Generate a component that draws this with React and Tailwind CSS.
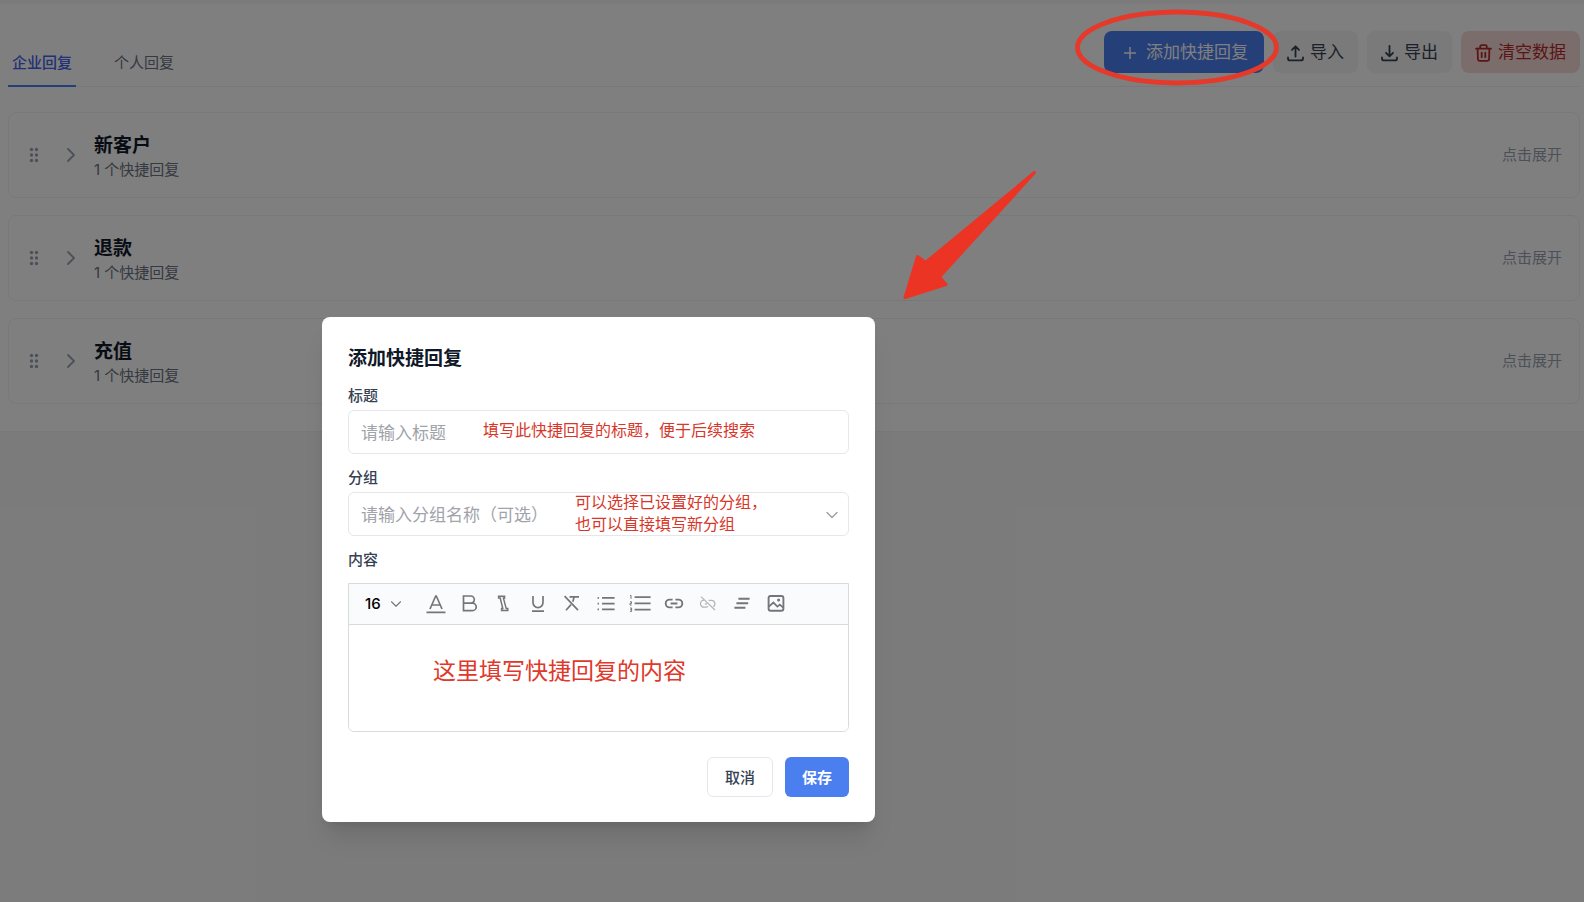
import { useState } from "react";
import { ChevronDown, ChevronRight } from "lucide-react";

const groups = [
  { id: 1, name: "新客户", count: 1 },
  { id: 2, name: "退款", count: 1 },
  { id: 3, name: "充值", count: 1 },
];

// header icons
const PlusIcon = () => (
  <svg width="20" height="20" viewBox="0 0 20 20" fill="none" stroke="currentColor" strokeWidth="1.5">
    <path d="M10 4v12M4 10h12" />
  </svg>
);

const UploadIcon = () => (
  <svg width="17" height="17" viewBox="0 0 17 17" fill="none" stroke="currentColor" strokeWidth="1.8" strokeLinecap="round" strokeLinejoin="round">
    <path d="M1 12.4v1a2 2 0 0 0 2 2h11a2 2 0 0 0 2-2v-1" />
    <path d="M8.5 11.6V1.4M5 4.8l3.5-3.5L12 4.8" />
  </svg>
);

const DownloadIcon = () => (
  <svg width="17" height="17" viewBox="0 0 17 17" fill="none" stroke="currentColor" strokeWidth="1.8" strokeLinecap="round" strokeLinejoin="round">
    <path d="M1 12.4v1a2 2 0 0 0 2 2h11a2 2 0 0 0 2-2v-1" />
    <path d="M8.5 1v10.2M5 7.8l3.5 3.5L12 7.8" />
  </svg>
);

const TrashIcon = () => (
  <svg width="17" height="18" viewBox="0 0 17 18" fill="none" stroke="currentColor" strokeWidth="1.8" strokeLinecap="round" strokeLinejoin="round">
    <path d="M1 4.6h15M5.2 4.6V2.6c0-.9.6-1.5 1.5-1.5h3.6c.9 0 1.5.6 1.5 1.5v2" />
    <path d="M2.6 4.6l.3 10.4c.1 1.1.9 1.9 2 1.9h7.2c1.1 0 1.9-.8 2-1.9l.3-10.4M6.7 8.6v4.6M10.3 8.6v4.6" />
  </svg>
);

const DragIcon = () => (
  <svg width="10" height="16" viewBox="0 0 10 16" fill="currentColor">
    {[2.5, 8, 13.5].map((y) => (
      <g key={y}>
        <circle cx="2.5" cy={y} r="1.7" />
        <circle cx="7.5" cy={y} r="1.7" />
      </g>
    ))}
  </svg>
);

// editor toolbar, every drawing sits on a 24px grid
const tools = [
  {
    label: "文字颜色",
    icon: (
      <>
        <path d="M6 17L11.7 4h.6L18 17M8.2 13h7.6" />
        <path d="M2.5 20.4h19" />
      </>
    ),
  },
  {
    label: "粗体",
    icon: <path d="M5.5 4h7.2a3.6 3.6 0 0 1 0 7.2H5.5zM5.5 11.2h9a3.7 3.7 0 0 1 0 7.4h-9zM5.5 4v14.6" />,
  },
  {
    label: "斜体",
    icon: <path d="M6.6 4.2h6v1.8h-1.2l2.8 10.6h1.6v1.8H9.6v-1.8h1.2L8.2 6H6.6z" strokeWidth="1.5" />,
  },
  {
    label: "下划线",
    icon: <path d="M7 4v6.6a5 5 0 0 0 10 0V4M6 19.2h12" />,
  },
  {
    label: "清除格式",
    icon: <path d="M4.6 4.2L18 18.2M9.5 4.8h9.5M14.2 4.8l-1.4 5M11 12.6l-5 5.6" />,
  },
  {
    label: "无序列表",
    icon: (
      <>
        <path d="M8 5.8h12.6M8 11.6h12.6M8 17.4h12.6" />
        <path d="M3.6 5.8h1.4M3.6 11.6h1.4M3.6 17.4h1.4" />
      </>
    ),
  },
  {
    label: "有序列表",
    icon: (
      <>
        <path d="M6.6 5.2h16M6.6 11.4h16M6.6 17.6h16" />
        <path d="M2 3.8l1-.4v3.4M2 9.8h1.5v1.6H2V13h1.6M2 16h1.6v3.4H2M2.2 17.7h1.2" strokeWidth="1" />
      </>
    ),
  },
  {
    label: "插入链接",
    icon: (
      <path d="M10.6 7.6H7.6a3.9 3.9 0 0 0 0 7.8h3M13.4 7.6h3a3.9 3.9 0 0 1 0 7.8h-3M8.6 11.5h6.8" strokeWidth="1.9" />
    ),
  },
  {
    label: "取消链接",
    muted: true,
    icon: (
      <path
        d="M5 4.6l14 13.4M9 8.2H8a3.5 3.5 0 0 0 0 7h2.4a3 3 0 0 0 1.6-1M12.6 8.4h3a3.4 3.4 0 0 1 1.8 6.2M8.8 11.8h2.2"
        strokeWidth="1.3"
      />
    ),
  },
  {
    label: "对齐方式",
    icon: <path d="M8.4 6.8h11.2M6.4 11.3h11.8M4.4 15.8h11" strokeWidth="1.9" />,
  },
  {
    label: "插入图片",
    icon: (
      <>
        <rect x="4.6" y="4" width="14.8" height="14.8" rx="2" strokeWidth="1.9" />
        <path d="M4.8 14.6l4.6-4 4 4 2.4-2 3.4 3" strokeWidth="1.8" />
        <circle cx="14.6" cy="8" r=".7" fill="currentColor" />
      </>
    ),
  },
];

const GroupCard = ({ name, count }) => (
  <li className="flex h-[86px] items-center justify-between rounded-lg border border-gray-200/60 px-5 pr-[17px]">
    <div className="flex items-center">
      <span className="text-gray-400">
        <DragIcon />
      </span>
      <ChevronRight size={24} strokeWidth={1.8} className="ml-5 text-gray-400" />
      <div className="ml-[11px] pt-1">
        <h3 className="text-[19px] font-bold leading-[26px] text-gray-900">{name}</h3>
        <p className="text-[15px] leading-[22px] text-gray-500">{count} 个快捷回复</p>
      </div>
    </div>
    <button className="text-[15px] text-gray-400">点击展开</button>
  </li>
);

function App() {
  const [tab, setTab] = useState("company");
  const [title, setTitle] = useState("");
  const [group, setGroup] = useState("");
  const [content, setContent] = useState("");

  const tabs = [
    { key: "company", label: "企业回复" },
    { key: "personal", label: "个人回复" },
  ];

  return (
    <div className="relative min-h-screen bg-[#f7f7f8] font-['Inter','Noto_Sans_CJK_SC',sans-serif]">
      <main className="border-b border-t-4 border-b-gray-200/60 border-t-[#f7f7f8] bg-white pb-[27px] pl-2 pr-1">
        <header className="flex items-end justify-between border-b border-gray-200/60 pt-[27px]">
          <nav className="flex gap-[34px]">
            {tabs.map((item) => (
              <button
                key={item.key}
                onClick={() => setTab(item.key)}
                className={`-mb-px h-[42px] border-b-2 px-1 pb-1 text-[15px] leading-[22px] ${
                  tab === item.key
                    ? "border-[#4b7ff0] font-medium text-[#4263eb]"
                    : "border-transparent text-gray-500"
                }`}
              >
                {item.label}
              </button>
            ))}
          </nav>
          <div className="mb-[13px] flex gap-[9px] text-[17px]">
            <button className="flex h-[42px] items-center gap-1.5 rounded-lg bg-[#4b7ff0] px-4 pt-0.5 text-white">
              <PlusIcon />
              添加快捷回复
            </button>
            <button className="flex h-[42px] items-center gap-1.5 rounded-lg bg-[#f4f4f5] px-[14px] pt-0.5 text-gray-700">
              <UploadIcon />
              导入
            </button>
            <button className="flex h-[42px] items-center gap-1.5 rounded-lg bg-[#f4f4f5] px-[14px] pt-0.5 text-gray-700">
              <DownloadIcon />
              导出
            </button>
            <button className="flex h-[42px] items-center gap-1.5 rounded-lg bg-[#f9dada] px-[14px] pt-0.5 text-[#b42a2a]">
              <TrashIcon />
              清空数据
            </button>
          </div>
        </header>

        <ul className="mt-[25px] flex flex-col gap-[17px]">
          {groups.map((item) => (
            <GroupCard key={item.id} name={item.name} count={item.count} />
          ))}
        </ul>
      </main>

      {/* dialog */}
      <div className="absolute inset-0 flex items-start bg-black/50 pl-[322px] pt-[317px]">
        <div
          role="dialog"
          aria-labelledby="dialog-title"
          className="w-full max-w-[553px] rounded-lg bg-white p-[26px] pb-[25px] shadow-xl"
        >
          <h2 id="dialog-title" className="text-[19px] font-semibold leading-8 text-gray-900">
            添加快捷回复
          </h2>
          <form onSubmit={(e) => e.preventDefault()}>
            <label htmlFor="title" className="mt-[10px] block text-[15px] font-medium leading-[22px] text-gray-700">
              标题
            </label>
            <div className="relative mt-[3px]">
              <input
                id="title"
                type="text"
                value={title}
                onChange={(e) => setTitle(e.target.value)}
                placeholder="请输入标题"
                className="block h-11 w-full rounded-md border border-gray-200 px-3 pt-0.5 text-[17px] outline-none placeholder:text-[#a0a3aa]"
              />
              <p className="pointer-events-none absolute left-[135px] top-[9px] text-[16px] leading-[22px] text-[#d9362a]">
                填写此快捷回复的标题，便于后续搜索
              </p>
            </div>

            <label htmlFor="group" className="mt-[13px] block text-[15px] font-medium leading-[22px] text-gray-700">
              分组
            </label>
            <div className="relative mt-[3px]">
              <input
                id="group"
                type="text"
                value={group}
                onChange={(e) => setGroup(e.target.value)}
                placeholder="请输入分组名称（可选）"
                className="block h-11 w-full rounded-md border border-gray-200 px-3 pt-0.5 text-[17px] outline-none placeholder:text-[#a0a3aa]"
              />
              <p className="pointer-events-none absolute -top-px left-[227px] text-[16px] leading-[22px] text-[#d9362a]">
                可以选择已设置好的分组，
                <br />
                也可以直接填写新分组
              </p>
              <ChevronDown
                size={20}
                strokeWidth={1.8}
                className="pointer-events-none absolute right-[7px] top-[13px] text-[#a0a3aa]"
              />
            </div>

            <label htmlFor="content" className="mt-[13px] block text-[15px] font-medium leading-[22px] text-gray-700">
              内容
            </label>
            <div className="relative mt-3 overflow-hidden rounded-b-md border border-[#d8dbde]">
              <div className="flex h-[41px] items-center border-b border-[#d8dbde] bg-[#f9fbfc] pl-4">
                <div className="relative mr-[14px] w-10">
                  <select
                    aria-label="字号"
                    defaultValue="16"
                    className="block w-full appearance-none bg-transparent text-[15px] font-medium leading-[22px] text-black outline-none"
                  >
                    <option>14</option>
                    <option>16</option>
                    <option>18</option>
                  </select>
                  <ChevronDown
                    size={18}
                    strokeWidth={1.5}
                    className="pointer-events-none absolute right-0 top-[2px] text-[#74767c]"
                  />
                </div>
                {tools.map((tool) => (
                  <button
                    key={tool.label}
                    type="button"
                    aria-label={tool.label}
                    className={`flex w-[34px] justify-center ${tool.muted ? "text-[#b4b6ba]" : "text-[#74767c]"}`}
                  >
                    <svg
                      width="24"
                      height="24"
                      viewBox="0 0 24 24"
                      fill="none"
                      stroke="currentColor"
                      strokeWidth="1.7"
                    >
                      {tool.icon}
                    </svg>
                  </button>
                ))}
              </div>
              <textarea
                id="content"
                value={content}
                onChange={(e) => setContent(e.target.value)}
                className="block h-[106px] w-full resize-none bg-white px-4 py-3 text-[16px] outline-none"
              />
              <p className="pointer-events-none absolute left-[84px] top-[71px] text-[23px] leading-8 text-[#e0382a]">
                这里填写快捷回复的内容
              </p>
            </div>

            <div className="mt-[25px] flex justify-end gap-3 text-[15px] font-medium">
              <button
                type="button"
                className="h-10 rounded-md border border-gray-200 bg-white px-[17px] pt-0.5 text-gray-700"
              >
                取消
              </button>
              <button type="submit" className="h-10 rounded-md bg-[#4b7ff0] px-[17px] pt-0.5 font-semibold text-white">
                保存
              </button>
            </div>
          </form>
        </div>
      </div>

      {/* red marks over the page */}
      <svg
        className="pointer-events-none absolute right-[304px] top-0"
        width="208"
        height="90"
        viewBox="0 0 208 90"
        fill="none"
      >
        <ellipse cx="105" cy="47.5" rx="99.5" ry="35.5" stroke="#e53a2b" strokeWidth="4.8" />
      </svg>
      <svg
        className="pointer-events-none absolute right-[544px] top-[165px]"
        width="140"
        height="140"
        viewBox="0 0 140 140"
      >
        <path
          d="M134.5 7.5L25.5 97.5L17.5 91.5L5 132.5L46 119.5L39.5 112Z"
          fill="#ec3424"
          stroke="#ec3424"
          strokeWidth="3"
          strokeLinejoin="round"
        />
      </svg>
    </div>
  );
}

export default App;
